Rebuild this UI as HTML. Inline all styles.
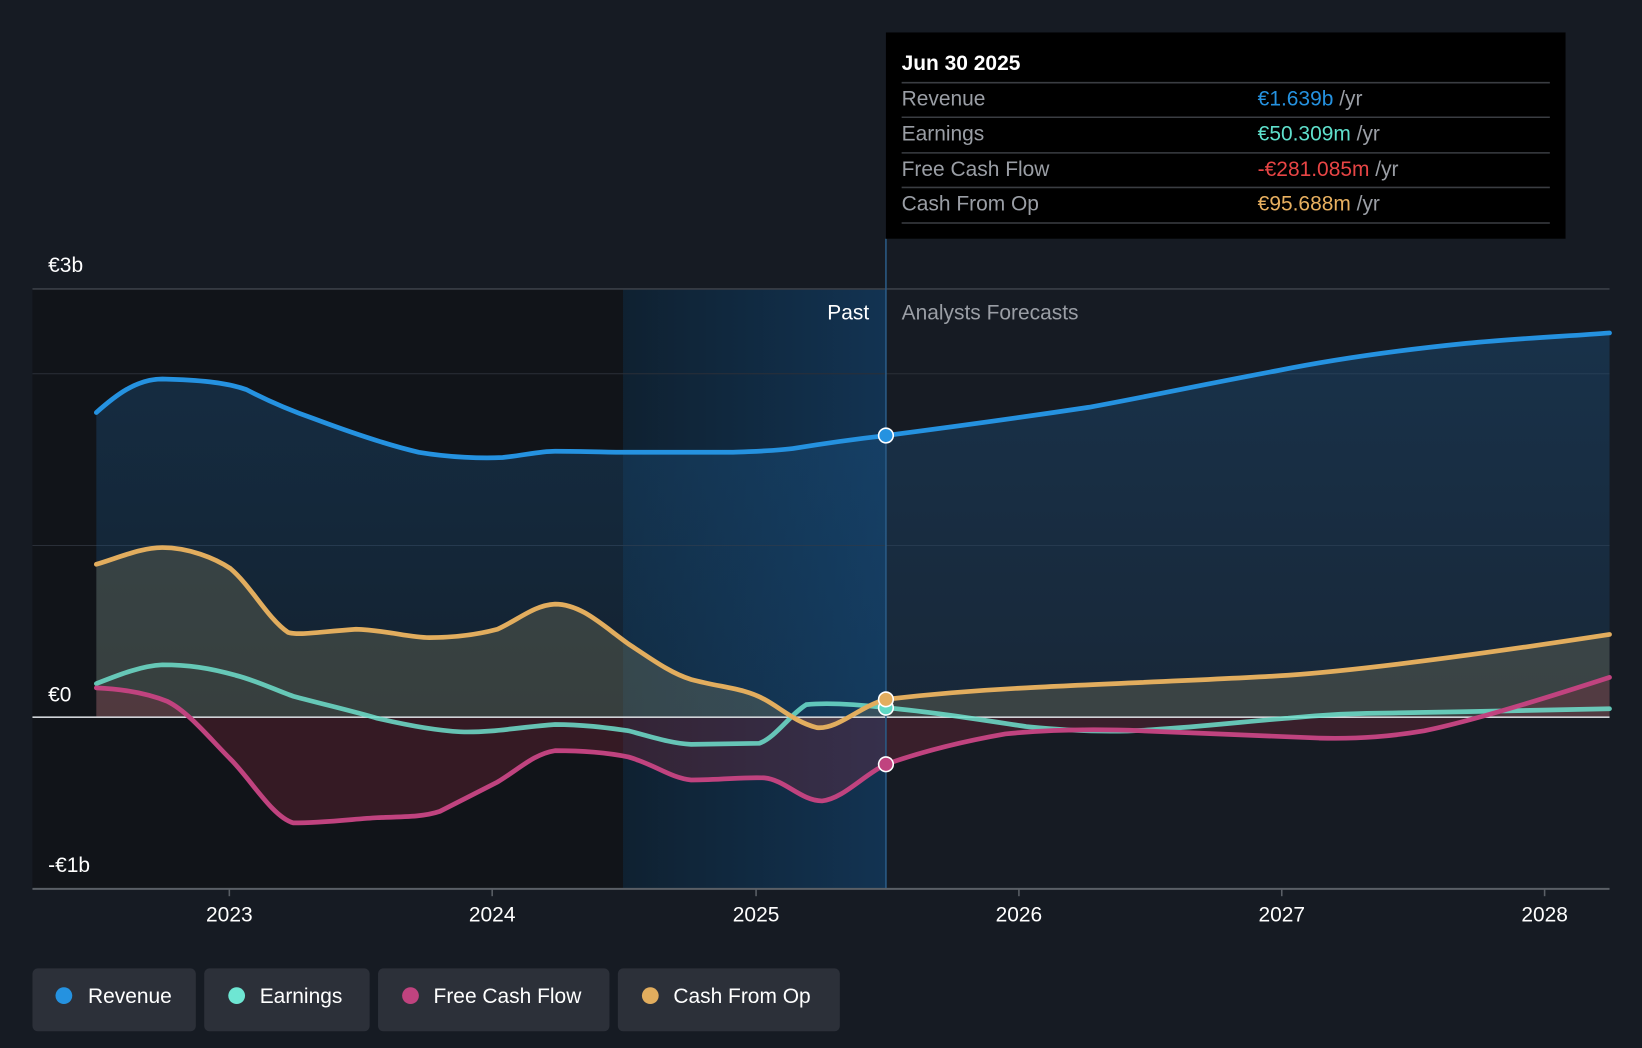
<!DOCTYPE html>
<html><head><meta charset="utf-8"><style>
html,body{margin:0;padding:0;background:#151a21;}
svg{display:block;font-family:"Liberation Sans",sans-serif;}
</style></head><body>
<svg width="1642" height="1048" viewBox="0 0 1568 1001" preserveAspectRatio="none">
<defs>
<linearGradient id="pg" x1="0" x2="1" y1="0" y2="0"><stop offset="0" stop-color="#0f2131"/><stop offset="1" stop-color="#123352"/></linearGradient>
<linearGradient id="rg" x1="0" x2="0" y1="0" y2="1"><stop offset="0" stop-color="#1d5a8f" stop-opacity="0.55"/><stop offset="1" stop-color="#1d5a8f" stop-opacity="0.3"/></linearGradient>
</defs>
<rect width="1568" height="1001" fill="#161b23"/>
<rect x="31" y="276" width="564" height="573" fill="#111419"/>
<rect x="595" y="276" width="251" height="573" fill="url(#pg)"/>
<line x1="31" x2="1537" y1="276" y2="276" stroke="#3a3f47" stroke-width="1.5"/>
<line x1="31" x2="1537" y1="357" y2="357" stroke="#2a2f38" stroke-width="1"/>
<line x1="31" x2="1537" y1="521" y2="521" stroke="#2a2f38" stroke-width="1"/>
<path d="M92,394 C110,378 130,362 155,362 C190,363 215,365 235,372 C260,385 280,393 300,400 C340,415 370,425 400,432 C430,437 460,438 480,437 C500,435 515,431 530,431 C560,431 580,432 600,432 L700,432 C720,431 740,431 760,428 C790,423 820,419 846,416 C900,409 960,401 1040,389 C1100,378 1160,365 1220,354 C1280,342 1340,334 1400,328 C1450,323 1500,321 1537,318 L1537,685 L92,685 Z" fill="url(#rg)" opacity="0.65"/>
<path d="M92,539 C115,532 135,523 155,523 C180,523 205,533 220,543 C240,560 255,590 275,604 C285,607 300,604 340,601 C370,602 390,609 410,609 C440,609 460,605 475,601 C495,592 510,578 530,577 C555,577 575,597 600,615 C620,628 640,643 660,649 C690,657 710,657 730,668 C745,676 760,690 780,695 C800,697 820,675 846,668 C880,664 920,660 980,657 C1050,653 1150,650 1230,645 C1300,640 1400,627 1537,606 L1537,685 L92,685 Z" fill="#8a8560" opacity="0.3"/>
<path d="M92,657 C115,658 140,662 160,670 C180,680 200,705 220,725 C240,745 260,780 280,786 C310,786 340,782 360,781 C390,780 405,780 420,775 C440,765 455,757 475,747 C495,735 510,720 530,717 C555,717 580,719 600,723 C625,730 640,743 660,745 C690,745 710,742 730,743 C750,745 765,765 785,765 C805,763 825,740 846,730 C880,718 920,708 960,701 C1000,697 1040,696 1090,698 C1140,700 1200,703 1260,705 C1300,706 1330,703 1360,698 C1400,690 1460,672 1537,647 L1537,685 L92,685 Z" fill="#8a2a40" opacity="0.3"/>
<line x1="31" x2="1537" y1="685" y2="685" stroke="#d0d3d8" stroke-width="1.5"/>
<line x1="846" x2="846" y1="228" y2="849" stroke="#2a5a85" stroke-width="1.5"/>
<g fill="none" stroke-width="4.5" stroke-linecap="round">
<path d="M92,394 C110,378 130,362 155,362 C190,363 215,365 235,372 C260,385 280,393 300,400 C340,415 370,425 400,432 C430,437 460,438 480,437 C500,435 515,431 530,431 C560,431 580,432 600,432 L700,432 C720,431 740,431 760,428 C790,423 820,419 846,416 C900,409 960,401 1040,389 C1100,378 1160,365 1220,354 C1280,342 1340,334 1400,328 C1450,323 1500,321 1537,318" stroke="#2592e0"/>
<path d="M92,653 C115,644 135,636 155,635 C180,635 200,638 225,645 C245,650 265,660 280,665 C310,673 340,680 360,686 C390,693 420,698 440,699 C470,700 500,694 530,692 C560,692 585,696 600,698 C620,703 640,710 660,711 L725,710 C740,705 755,682 770,673 C790,671 820,673 846,676 C890,680 940,688 980,694 C1020,698 1060,700 1100,697 C1150,694 1200,688 1230,686 C1260,683 1290,681 1330,681 C1400,680 1480,678 1537,677" stroke="#6ee0cc" opacity="0.85"/>
<path d="M92,657 C115,658 140,662 160,670 C180,680 200,705 220,725 C240,745 260,780 280,786 C310,786 340,782 360,781 C390,780 405,780 420,775 C440,765 455,757 475,747 C495,735 510,720 530,717 C555,717 580,719 600,723 C625,730 640,743 660,745 C690,745 710,742 730,743 C750,745 765,765 785,765 C805,763 825,740 846,730 C880,718 920,708 960,701 C1000,697 1040,696 1090,698 C1140,700 1200,703 1260,705 C1300,706 1330,703 1360,698 C1400,690 1460,672 1537,647" stroke="#c0437f"/>
<path d="M92,539 C115,532 135,523 155,523 C180,523 205,533 220,543 C240,560 255,590 275,604 C285,607 300,604 340,601 C370,602 390,609 410,609 C440,609 460,605 475,601 C495,592 510,578 530,577 C555,577 575,597 600,615 C620,628 640,643 660,649 C690,657 710,657 730,668 C745,676 760,690 780,695 C800,697 820,675 846,668 C880,664 920,660 980,657 C1050,653 1150,650 1230,645 C1300,640 1400,627 1537,606" stroke="#e2ad5e"/>
</g>
<g stroke="#fff" stroke-width="1.5">
<circle cx="846" cy="416" r="7" fill="#2592e0"/>
<circle cx="846" cy="676" r="7" fill="#5fd8c4"/>
<circle cx="846" cy="668" r="7" fill="#e2ad5e"/>
<circle cx="846" cy="730" r="7" fill="#c0437f"/>
</g>
<line x1="31" x2="1537" y1="849" y2="849" stroke="#5a5f66" stroke-width="2"/>
<g stroke="#5a5f66" stroke-width="1.5">
<line x1="219" x2="219" y1="849" y2="856"/><line x1="470" x2="470" y1="849" y2="856"/><line x1="722" x2="722" y1="849" y2="856"/><line x1="973" x2="973" y1="849" y2="856"/><line x1="1224" x2="1224" y1="849" y2="856"/><line x1="1475" x2="1475" y1="849" y2="856"/>
</g>
<g fill="#fff" font-size="20">
<text x="46" y="260">€3b</text><text x="46" y="670">€0</text><text x="46" y="833">-€1b</text>
<g text-anchor="middle"><text x="219" y="880">2023</text><text x="470" y="880">2024</text><text x="722" y="880">2025</text><text x="973" y="880">2026</text><text x="1224" y="880">2027</text><text x="1475" y="880">2028</text></g>
<text x="830" y="305" text-anchor="end">Past</text>
</g>
<text x="861" y="305" fill="#9a9ea5" font-size="20">Analysts Forecasts</text>
<rect x="846" y="31" width="649" height="197" fill="#000"/>
<text x="861" y="67" fill="#fff" font-size="20" font-weight="bold">Jun 30 2025</text>
<g stroke="#3a3d42" stroke-width="1.5"><line x1="861" x2="1480" y1="79" y2="79"/><line x1="861" x2="1480" y1="112" y2="112"/><line x1="861" x2="1480" y1="146" y2="146"/><line x1="861" x2="1480" y1="179" y2="179"/><line x1="861" x2="1480" y1="213" y2="213"/></g>
<g font-size="20" fill="#9a9ea5">
<text x="861" y="101">Revenue</text><text x="861" y="134">Earnings</text><text x="861" y="168">Free Cash Flow</text><text x="861" y="201">Cash From Op</text>
<text x="1201" y="101"><tspan fill="#2592e0">€1.639b</tspan> /yr</text>
<text x="1201" y="134"><tspan fill="#5fe0cc">€50.309m</tspan> /yr</text>
<text x="1201" y="168"><tspan fill="#e84545">-€281.085m</tspan> /yr</text>
<text x="1201" y="201"><tspan fill="#e8b060">€95.688m</tspan> /yr</text>
</g>
<g fill="#2c3039">
<rect x="31" y="925" width="156" height="60" rx="5"/><rect x="195" y="925" width="158" height="60" rx="5"/><rect x="361" y="925" width="221" height="60" rx="5"/><rect x="590" y="925" width="212" height="60" rx="5"/>
</g>
<circle cx="61" cy="951" r="8" fill="#2592e0"/><circle cx="226" cy="951" r="8" fill="#6ee6d3"/><circle cx="392" cy="951" r="8" fill="#c0437f"/><circle cx="621" cy="951" r="8" fill="#e2ad5e"/>
<g fill="#fff" font-size="20">
<text x="84" y="958">Revenue</text><text x="248" y="958">Earnings</text><text x="414" y="958">Free Cash Flow</text><text x="643" y="958">Cash From Op</text>
</g>
</svg>
</body></html>
